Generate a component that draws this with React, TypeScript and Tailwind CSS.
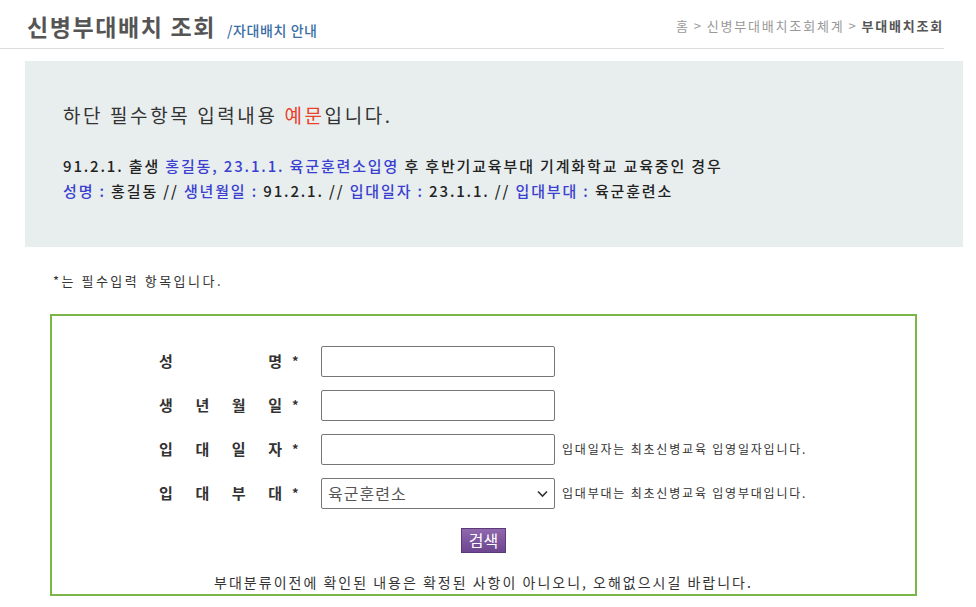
import React from 'react';

const font = { fontFamily: '"Noto Sans CJK KR", "Noto Sans", sans-serif' };

function Label({ chars }: { chars: string[] }) {
  return (
    <div className="flex w-[269px] shrink-0 items-center pl-[107px]">
      <div className="flex w-[123px] justify-between text-[15px] font-bold text-[#333]">
        {chars.map((c, i) => (
          <span key={i}>{c}</span>
        ))}
      </div>
      <span className="ml-[10px] text-[13px] font-bold text-[#333]">*</span>
    </div>
  );
}

function Row({
  chars,
  children,
  help,
}: {
  chars: string[];
  children: React.ReactNode;
  help?: string;
}) {
  return (
    <div className="flex h-[31px] items-center">
      <Label chars={chars} />
      {children}
      {help && <span className="ml-[7px] text-[12px] tracking-[1.8px] text-[#333]">{help}</span>}
    </div>
  );
}

export default function App() {
  return (
    <div className="min-h-[607px] w-[976px] bg-white" style={font}>
      <header className="flex h-[49px] w-[944px] items-center justify-between border-b border-[#dcdcdc] pl-[27px] pt-[4px]">
        <div className="flex items-baseline">
          <h1 className="text-[23px] font-bold tracking-[1.6px] text-[#555]">신병부대배치 조회</h1>
          <span className="ml-[11px] text-[14px] font-medium tracking-[0.6px] text-[#3a6ea5]">/자대배치 안내</span>
        </div>
        <nav className="flex items-center text-[13px] tracking-[1.8px] text-[#999]">
          <span>홈</span>
          <span className="mx-[4px]">&gt;</span>
          <span>신병부대배치조회체계</span>
          <span className="mx-[4px]">&gt;</span>
          <span className="font-bold text-[#555]">부대배치조회</span>
        </nav>
      </header>

      <section className="ml-[25px] mt-[12px] h-[186px] w-[938px] bg-[#e8eeee] pl-[38px] pt-[40px]">
        <p className="text-[19px] leading-[28px] tracking-[2.6px] text-[#333]">
          하단 필수항목 입력내용 <span className="text-[#e8402a]">예문</span>입니다.
        </p>
        <div className="mt-[24px] text-[15px] font-medium leading-[25px] tracking-[1.85px] text-[#222]">
          <p>
            91.2.1. 출생 <span className="text-[#3a3fd0]">홍길동, 23.1.1. 육군훈련소입영</span> 후 후반기교육부대 기계화학교 교육중인 경우
          </p>
          <p>
            <span className="text-[#3a3fd0]">성명 :</span> 홍길동 // <span className="text-[#3a3fd0]">생년월일 :</span> 91.2.1. //{' '}
            <span className="text-[#3a3fd0]">입대일자 :</span> 23.1.1. // <span className="text-[#3a3fd0]">입대부대 :</span> 육군훈련소
          </p>
        </div>
      </section>

      <p className="ml-[53px] mt-[24px] text-[13px] tracking-[2.5px] text-[#333]">*는 필수입력 항목입니다.</p>

      <form className="ml-[50px] mt-[23px] h-[282px] w-[867px] border-2 border-[#7ab648] pt-[30px]">
        <div className="flex flex-col gap-[13px]">
          <Row chars={['성', '명']}>
            <input className="h-[31px] w-[234px] rounded-[2px] border border-[#767676] bg-white" />
          </Row>
          <Row chars={['생', '년', '월', '일']}>
            <input className="h-[31px] w-[234px] rounded-[2px] border border-[#767676] bg-white" />
          </Row>
          <Row chars={['입', '대', '일', '자']} help="입대일자는 최초신병교육 입영일자입니다.">
            <input className="h-[31px] w-[234px] rounded-[2px] border border-[#767676] bg-white" />
          </Row>
          <Row chars={['입', '대', '부', '대']} help="입대부대는 최초신병교육 입영부대입니다.">
            <div className="relative flex h-[31px] w-[234px] items-center rounded-[2px] border border-[#767676] bg-white pl-[6px] text-[16px] tracking-[1px] text-[#555]">
              육군훈련소
              <svg className="absolute right-[6px] top-[11px]" width="11" height="8" viewBox="0 0 11 8">
                <path d="M1 1.5 L5.5 6 L10 1.5" fill="none" stroke="#333" strokeWidth="1.6" />
              </svg>
            </div>
          </Row>
        </div>
        <div className="mt-[19px] flex justify-center">
          <button
            type="button"
            className="h-[25px] w-[45px] border border-[#5c3a78] bg-gradient-to-b from-[#9068ad] to-[#6d4590] text-[16px] leading-none text-white"
          >
            검색
          </button>
        </div>
        <p className="mt-[19px] text-center text-[14px] tracking-[2px] text-[#333]">
          부대분류이전에 확인된 내용은 확정된 사항이 아니오니, 오해없으시길 바랍니다.
        </p>
      </form>
    </div>
  );
}
